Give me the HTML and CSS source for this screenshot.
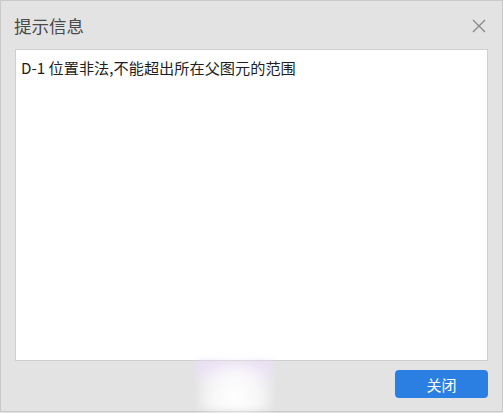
FILE: index.html
```html
<!DOCTYPE html>
<html lang="zh">
<head>
<meta charset="utf-8">
<link rel="stylesheet" href="styles.css">
</head>
<body>
<div class="dialog">
  <div class="header">
    <span class="title">提示信息</span>
    <svg class="close" width="16" height="16" viewBox="0 0 16 16"><path d="M2 2 L14 14 M14 2 L2 14" stroke="#8a8a8a" stroke-width="1.4" fill="none"/></svg>
  </div>
  <div class="content">D-1 位置非法,不能超出所在父图元的范围</div>
  <div class="footer">
    <span class="glow"></span>
    <button class="btn">关闭</button>
  </div>
</div>
</body>
</html>
```
FILE: styles.css
```css
html, body { margin: 0; padding: 0; }
body {
  width: 503px; height: 413px;
  background: #e3e3e3;
  font-family: "Noto Sans CJK SC", "Noto Sans", sans-serif;
}
.dialog {
  box-sizing: border-box;
  width: 503px; height: 412px;
  border: 1px solid #c9c9c9;
  background: #e3e3e3;
  display: flex; flex-direction: column;
  padding: 0 14px 0 14px;
}
.header {
  height: 48px;
  display: flex; align-items: center; justify-content: space-between;
  padding-top: 1px;
  box-sizing: border-box;
}
.title { font-size: 17.5px; color: #4a4a4a; margin-left: -1px; }
.close { margin-right: 1px; margin-top: 1px; }
.content {
  box-sizing: border-box;
  height: 312px;
  background: #fff;
  border: 1px solid #cfcfcf;
  padding: 6px 5px;
  font-size: 15.2px; line-height: 22px;
  color: #1e1e1e;
}
.footer {
  position: relative;
  flex: 1;
  display: flex; justify-content: flex-end; align-items: flex-start;
  padding-top: 9px;
}
.glow {
  position: absolute; left: 182px; top: 0; width: 76px; height: 100%;
  background: radial-gradient(ellipse at 50% 72%, rgba(255,255,255,1) 0%, rgba(255,255,255,0.7) 45%, rgba(255,255,255,0) 80%),
              linear-gradient(180deg, rgba(236,222,250,0.95) 0%, rgba(240,230,250,0.5) 35%, rgba(255,255,255,0) 60%);
  filter: blur(3px);
}
.btn {
  position: relative;
  width: 93px; height: 28px;
  border: none; border-radius: 4px;
  background: #2c7fe2;
  color: #fff;
  font-family: inherit; font-size: 15px;
  padding: 0;
}
```
